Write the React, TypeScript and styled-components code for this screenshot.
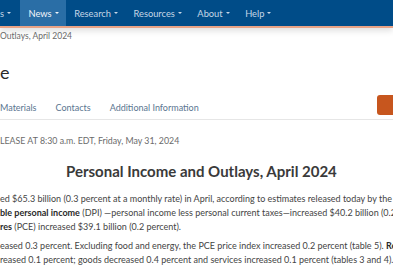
import React from "react";
import styled, { createGlobalStyle } from "styled-components";

const GlobalStyle = createGlobalStyle`
  html, body {
    margin: 0;
    padding: 0;
    background: #fff;
    overflow: hidden;
  }
  body {
    font-family: Lato, "Open Sans", "Liberation Sans", sans-serif;
    color: #333;
  }
`;

const Page = styled.div`
  width: 393px;
  height: 267px;
  overflow: hidden;
`;

const NavBar = styled.nav`
  display: flex;
  align-items: stretch;
  height: 26px;
  background: #004c88;
  border-bottom: 2px solid #e8a386;
  box-shadow: 0 3px 6px rgba(0, 0, 0, 0.12);
  position: relative;
  z-index: 1;
`;

const NavItem = styled.div<{ $active?: boolean; $first?: boolean }>`
  display: flex;
  align-items: center;
  padding: ${(p) => (p.$first ? "0 9px 0 0" : "0 7px 0 8.5px")};
  font-size: 9.3px;
  color: ${(p) => (p.$active ? "#f2f6fa" : "#c5d6e6")};
  background: ${(p) => (p.$active ? "#2a6ea6" : "transparent")};
  white-space: nowrap;
  &::after {
    content: "";
    display: inline-block;
    margin-left: 3px;
    border-left: 2.5px solid transparent;
    border-right: 2.5px solid transparent;
    border-top: 2.5px solid currentColor;
  }
`;

const Breadcrumb = styled.div`
  font-size: 8.5px;
  line-height: 12px;
  color: #6b6b6b;
  padding-top: 2px;
  white-space: nowrap;
`;

const PageTitle = styled.h1`
  margin: 18px 0 0;
  font-size: 18px;
  font-weight: 400;
  line-height: 24px;
  color: #2a2a2a;
`;

const TabRow = styled.div`
  display: flex;
  align-items: center;
  margin-top: 11px;
  height: 24px;
  border-bottom: 1px solid #e6e6e6;
`;

const Tab = styled.span`
  font-size: 9px;
  color: #5a7590;
  margin-right: 19px;
  white-space: nowrap;
`;

const OrangeButton = styled.div`
  align-self: flex-start;
  margin-left: auto;
  margin-right: -12px;
  width: 28px;
  height: 20px;
  border-radius: 3px;
  background: #c7561e;
`;

const ReleaseLine = styled.div`
  margin-top: 15px;
  font-size: 8.8px;
  line-height: 12px;
  color: #6b6b6b;
  white-space: nowrap;
`;

const Heading = styled.h2`
  margin: 14px 0 0;
  padding-left: 66px;
  font-size: 15px;
  line-height: 20px;
  font-weight: 700;
  color: #3a3a3a;
  white-space: nowrap;
`;

const Body = styled.div`
  margin-top: 11px;
  font-size: 9px;
  line-height: 14px;
  color: #444;
`;

const Para = styled.p`
  margin: 0 0 5px;
`;

const Line = styled.div`
  white-space: nowrap;
`;

const Strong = styled.b`
  font-weight: 700;
  color: #2a2a2a;
`;

export default function App() {
  return (
    <Page>
      <GlobalStyle />
      <NavBar>
        <NavItem $first>s</NavItem>
        <NavItem $active>News</NavItem>
        <NavItem>Research</NavItem>
        <NavItem>Resources</NavItem>
        <NavItem>About</NavItem>
        <NavItem>Help</NavItem>
      </NavBar>
      <Breadcrumb>Outlays, April 2024</Breadcrumb>
      <PageTitle>e</PageTitle>
      <TabRow>
        <Tab>Materials</Tab>
        <Tab>Contacts</Tab>
        <Tab>Additional Information</Tab>
        <OrangeButton />
      </TabRow>
      <ReleaseLine>LEASE AT 8:30 a.m. EDT, Friday, May 31, 2024</ReleaseLine>
      <Heading>Personal Income and Outlays, April 2024</Heading>
      <Body>
        <Para>
          <Line>
            ed $65.3 billion (0.3 percent at a monthly rate) in April, according to estimates released today by the B
          </Line>
          <Line>
            <Strong>ble personal income</Strong> (DPI) —personal income less personal current taxes—increased $40.2 billion (0.2
          </Line>
          <Line>
            <Strong>res</Strong> (PCE) increased $39.1 billion (0.2 percent).
          </Line>
        </Para>
        <Para>
          <Line>
            eased 0.3 percent. Excluding food and energy, the PCE price index increased 0.2 percent (table 5). <Strong>Rea</Strong>
          </Line>
          <Line>
            reased 0.1 percent; goods decreased 0.4 percent and services increased 0.1 percent (tables 3 and 4).
          </Line>
        </Para>
      </Body>
    </Page>
  );
}
